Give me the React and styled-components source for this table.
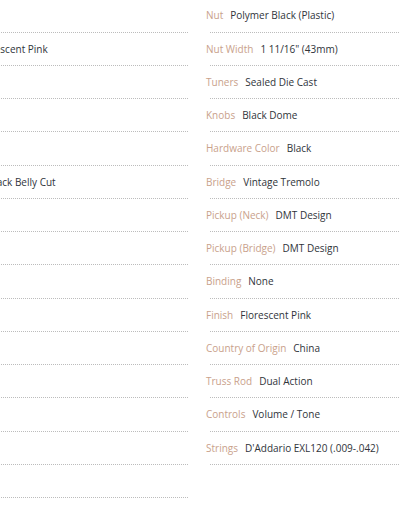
import styled, { createGlobalStyle } from "styled-components";

const GlobalStyle = createGlobalStyle`
  html, body {
    margin: 0;
    padding: 0;
    background: #fff;
    overflow: hidden;
  }
  body {
    font-family: "Open Sans", "Noto Sans", sans-serif;
  }
`;

const leftSpecs = [
  { label: "Top", value: "Flat" },
  { label: "Color", value: "Florescent Pink" },
  { label: "Body", value: "Ash" },
  { label: "Neck", value: "Bolt" },
  { label: "Shape", value: "C" },
  { label: "Contour", value: "Back Belly Cut" },
  { label: "Frets", value: "22" },
  { label: "Inlay", value: "Dot" },
  { label: "Scale", value: "25" },
  { label: "Joint", value: "4B" },
  { label: "Guard", value: "3P" },
  { label: "Case", value: "No" },
  { label: "Year", value: "2021" },
  { label: "Strap", value: "No" },
  { label: "Tool", value: "Yes" },
];

const rightSpecs = [
  { label: "Nut", value: "Polymer Black (Plastic)" },
  { label: "Nut Width", value: '1 11/16" (43mm)' },
  { label: "Tuners", value: "Sealed Die Cast" },
  { label: "Knobs", value: "Black Dome" },
  { label: "Hardware Color", value: "Black" },
  { label: "Bridge", value: "Vintage Tremolo" },
  { label: "Pickup (Neck)", value: "DMT Design" },
  { label: "Pickup (Bridge)", value: "DMT Design" },
  { label: "Binding", value: "None" },
  { label: "Finish", value: "Florescent Pink" },
  { label: "Country of Origin", value: "China" },
  { label: "Truss Rod", value: "Dual Action" },
  { label: "Controls", value: "Volume / Tone" },
  { label: "Strings", value: "D'Addario EXL120 (.009-.042)" },
];

const SpecList = ({ specs }) => (
  <Column>
    {specs.map((s) => (
      <Row key={s.label}>
        <Entry>
          <Label>{s.label}</Label>
          <Value>{s.value}</Value>
        </Entry>
        <Divider />
      </Row>
    ))}
  </Column>
);

const App = () => {
  return (
    <>
      <GlobalStyle />
      <Sheet>
        <SpecList specs={leftSpecs} />
        <SpecList specs={rightSpecs} />
      </Sheet>
    </>
  );
};

const Sheet = styled.div`
  display: grid;
  grid-template-columns: 243px 243px;
  column-gap: 18px;
  width: 504px;
  margin-left: -55px;
  margin-top: -0.75px;
`;

const Column = styled.ul`
  list-style: none;
  margin: 0;
  padding: 0;
  display: flex;
  flex-direction: column;
`;

const Row = styled.li`
  display: flex;
  flex-direction: column;
`;

const Entry = styled.div`
  display: flex;
  gap: 7px;
  padding: 8px 0;
  font-size: 10px;
  line-height: 16.25px;
  white-space: nowrap;
`;

const Label = styled.span`
  color: #c9a18b;
`;

const Value = styled.span`
  color: #30343a;
`;

const Divider = styled.div`
  margin-left: 4px;
  border-bottom: 1px dotted #bcbcbc;
`;

export default App;
